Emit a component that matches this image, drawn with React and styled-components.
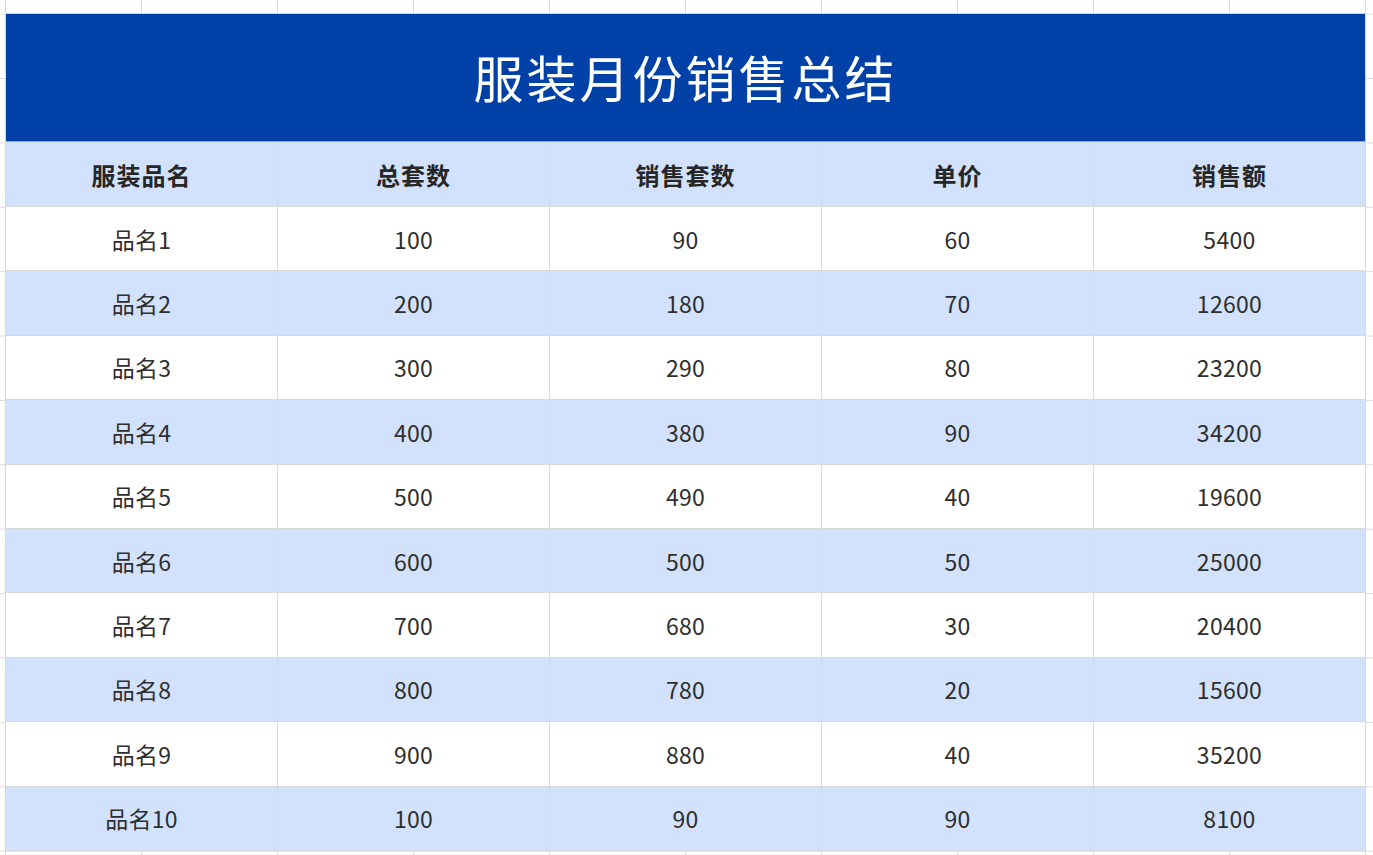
import React from 'react';
import styled, { createGlobalStyle } from 'styled-components';

const GlobalStyle = createGlobalStyle`
  html, body {
    margin: 0;
    padding: 0;
    height: 855px;
    overflow: hidden;
  }
  body {
    font-family: "Noto Sans CJK SC", "Noto Sans", sans-serif;
    background-color: #ffffff;
    background-image:
      linear-gradient(to right, #dcdcdc 1px, transparent 1px),
      linear-gradient(to bottom, #dcdcdc 1px, transparent 1px);
    background-size: 136px 64.4px;
    background-position: 5px 13.6px;
  }
`;

const Sheet = styled.div`
  padding: 13px 0 0 5px;
`;

const Table = styled.div`
  width: 1360px;
  border-left: 1px solid #d6d6d6;
  border-top: 1px solid #d6d6d6;
`;

const Banner = styled.div`
  height: 128px;
  background: #0041a8;
  border-right: 1px solid #d6d6d6;
  border-bottom: 1px solid #8da6d4;
  display: flex;
  align-items: center;
  justify-content: center;
  color: #ffffff;
  font-size: 50px;
  letter-spacing: 3px;
  padding-bottom: 4px;
  box-sizing: border-box;
`;

const Row = styled.div`
  display: grid;
  grid-template-columns: repeat(5, 272px);
  height: ${(p) => p.$height}px;
  background: ${(p) => (p.$tinted ? '#d2e1fc' : '#ffffff')};
`;

const Cell = styled.div`
  display: flex;
  align-items: center;
  justify-content: center;
  border-right: 1px solid #d9d9d9;
  border-bottom: 1px solid #d9d9d9;
  font-size: ${(p) => (p.$head ? 24 : 23)}px;
  font-weight: ${(p) => (p.$head ? 700 : 400)};
  color: ${(p) => (p.$head ? '#262626' : '#2e2e2e')};
  letter-spacing: ${(p) => (p.$head ? '1px' : '0.3px')};
`;

const columns = ['服装品名', '总套数', '销售套数', '单价', '销售额'];

const rows = [
  ['品名1', 100, 90, 60, 5400],
  ['品名2', 200, 180, 70, 12600],
  ['品名3', 300, 290, 80, 23200],
  ['品名4', 400, 380, 90, 34200],
  ['品名5', 500, 490, 40, 19600],
  ['品名6', 600, 500, 50, 25000],
  ['品名7', 700, 680, 30, 20400],
  ['品名8', 800, 780, 20, 15600],
  ['品名9', 900, 880, 40, 35200],
  ['品名10', 100, 90, 90, 8100],
];

export default function App() {
  return (
    <>
      <GlobalStyle />
      <Sheet>
        <Table>
          <Banner>服装月份销售总结</Banner>
          <Row $tinted $height={65}>
            {columns.map((c) => (
              <Cell key={c} $head>{c}</Cell>
            ))}
          </Row>
          {rows.map((r, i) => (
            <Row key={r[0]} $tinted={i % 2 === 1} $height={64.4}>
              {r.map((v, j) => (
                <Cell key={j}>{v}</Cell>
              ))}
            </Row>
          ))}
        </Table>
      </Sheet>
    </>
  );
}
